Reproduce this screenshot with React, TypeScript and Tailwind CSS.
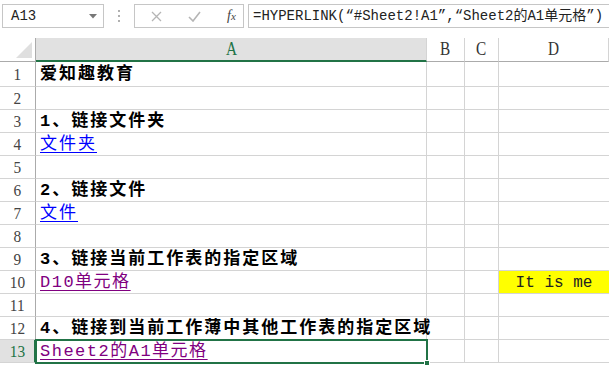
import React from "react";

const CJK = "font-['Liberation_Mono','Noto_Sans_CJK_SC',monospace]";

type Cell = { text?: string; kind?: "bold" | "link" | "visited" };

const ROWS: Cell[] = [
  { text: "爱知趣教育", kind: "bold" },
  {},
  { text: "1、链接文件夹", kind: "bold" },
  { text: "文件夹", kind: "link" },
  {},
  { text: "2、链接文件", kind: "bold" },
  { text: "文件", kind: "link" },
  {},
  { text: "3、链接当前工作表的指定区域", kind: "bold" },
  { text: "D10单元格", kind: "visited" },
  {},
  { text: "4、链接到当前工作薄中其他工作表的指定区域", kind: "bold" },
  { text: "Sheet2的A1单元格", kind: "visited" },
];

const FormulaBar = () => (
  <div className="flex items-center h-[38px] pt-[4px] pb-[10px] pl-[2px] gap-[4px]">
    <div className="flex items-center w-[102px] h-[24px] border border-[#c6c6c6] pl-[8px] pr-[6px]">
      <span className={`${CJK} text-[14px] text-[#222] flex-1`}>A13</span>
      <svg width="8" height="5" viewBox="0 0 8 5">
        <path d="M0 0h8L4 4.5z" fill="#777" />
      </svg>
    </div>
    <div className="w-[22px] flex flex-col items-center gap-[3px]">
      <span className="w-[2px] h-[2px] bg-[#b0b0b0]" />
      <span className="w-[2px] h-[2px] bg-[#b0b0b0]" />
      <span className="w-[2px] h-[2px] bg-[#b0b0b0]" />
    </div>
    <div className="flex items-center w-[110px] h-[24px] border border-[#c6c6c6] pl-[16px] gap-[26px]">
      <svg width="11" height="11" viewBox="0 0 11 11">
        <path d="M1 1l9 9M10 1l-9 9" stroke="#b5b5b5" strokeWidth="1.3" />
      </svg>
      <svg width="13" height="11" viewBox="0 0 13 11">
        <path d="M1 6l4 4 7-9" stroke="#b5b5b5" strokeWidth="1.6" fill="none" />
      </svg>
      <span className="font-['Liberation_Serif',serif] italic text-[14px] text-[#444] leading-none">
        f<span className="text-[11px]">x</span>
      </span>
    </div>
    <div className="flex-1 min-w-0 flex items-center h-[24px] border border-[#c6c6c6] border-r-0 pl-[4px] overflow-hidden whitespace-nowrap">
      <span className={`${CJK} text-[14px] text-[#222]`}>
        =HYPERLINK(“#Sheet2!A1”,“Sheet2的A1单元格”)
      </span>
    </div>
  </div>
);

const cellText = (c: Cell) => {
  if (!c.text) return null;
  const base = `${CJK} text-[17px] whitespace-nowrap`;
  if (c.kind === "bold")
    return <span className={`${base} tracking-[2px] font-bold text-black`}>{c.text}</span>;
  if (c.kind === "link")
    return (
      <span className={`${base} tracking-[2px] text-[#0000ff] underline underline-offset-[3px]`}>{c.text}</span>
    );
  return (
    <span className={`${base} tracking-[1.5px] text-[#800080] underline underline-offset-[3px]`}>{c.text}</span>
  );
};

export default function App() {
  return (
    <div className="w-[609px] h-[367px] bg-white overflow-hidden">
      <FormulaBar />
      <div className="grid grid-cols-[36px_391px_38px_34px_1fr] grid-rows-[24px_25px] auto-rows-[23px]">
        {/* header row */}
        <div className="relative border-r border-b border-[#ababab] bg-white">
          <svg className="absolute right-[3px] bottom-[3px]" width="16" height="16" viewBox="0 0 16 16">
            <path d="M16 0V16H0z" fill="#dfdfdf" />
          </svg>
        </div>
        <div className="flex items-center justify-center bg-[#e1e1e1] border-r border-[#d4d4d4] border-b-2 border-b-[#217346]">
          <span className="font-['Liberation_Serif',serif] text-[18px] text-[#217346] scale-x-[0.85]">A</span>
        </div>
        {["B", "C", "D"].map((h) => (
          <div key={h} className="flex items-center justify-center border-r border-b border-[#d4d4d4] border-b-[#ababab]">
            <span className="font-['Liberation_Serif',serif] text-[18px] text-[#333] scale-x-[0.85]">{h}</span>
          </div>
        ))}
        {ROWS.map((c, i) => {
          const sel = i === 12;
          return (
            <React.Fragment key={i}>
              <div
                className={`flex items-center justify-center pt-[2px] border-b border-[#d4d4d4] border-r ${
                  sel ? "bg-[#e1e1e1] border-r-2 border-r-[#217346]" : "border-r-[#ababab]"
                }`}
              >
                <span
                  className={`font-['Liberation_Serif',serif] text-[17px] scale-x-[0.9] ${
                    sel ? "text-[#217346]" : "text-[#444]"
                  }`}
                >
                  {i + 1}
                </span>
              </div>
              <div
                className={`relative flex items-center pl-[4px] pt-[2px] border-r border-b border-[#d4d4d4] ${
                  sel ? "outline-2 outline-[#217346] -outline-offset-1 z-10" : ""
                }`}
              >
                {cellText(c)}
                {sel && <span className="absolute right-[-4px] bottom-[-4px] w-[6px] h-[6px] bg-[#217346] border border-white" />}
              </div>
              <div className="border-r border-b border-[#d4d4d4]" />
              <div className="border-r border-b border-[#d4d4d4]" />
              {i === 9 ? (
                <div className="flex items-center justify-center pt-[2px] bg-[#ffff00] border-b border-[#d4d4d4]">
                  <span className="font-['Liberation_Mono',monospace] text-[16px] text-[#222]">It is me</span>
                </div>
              ) : (
                <div className="border-b border-[#d4d4d4]" />
              )}
            </React.Fragment>
          );
        })}
      </div>
    </div>
  );
}
